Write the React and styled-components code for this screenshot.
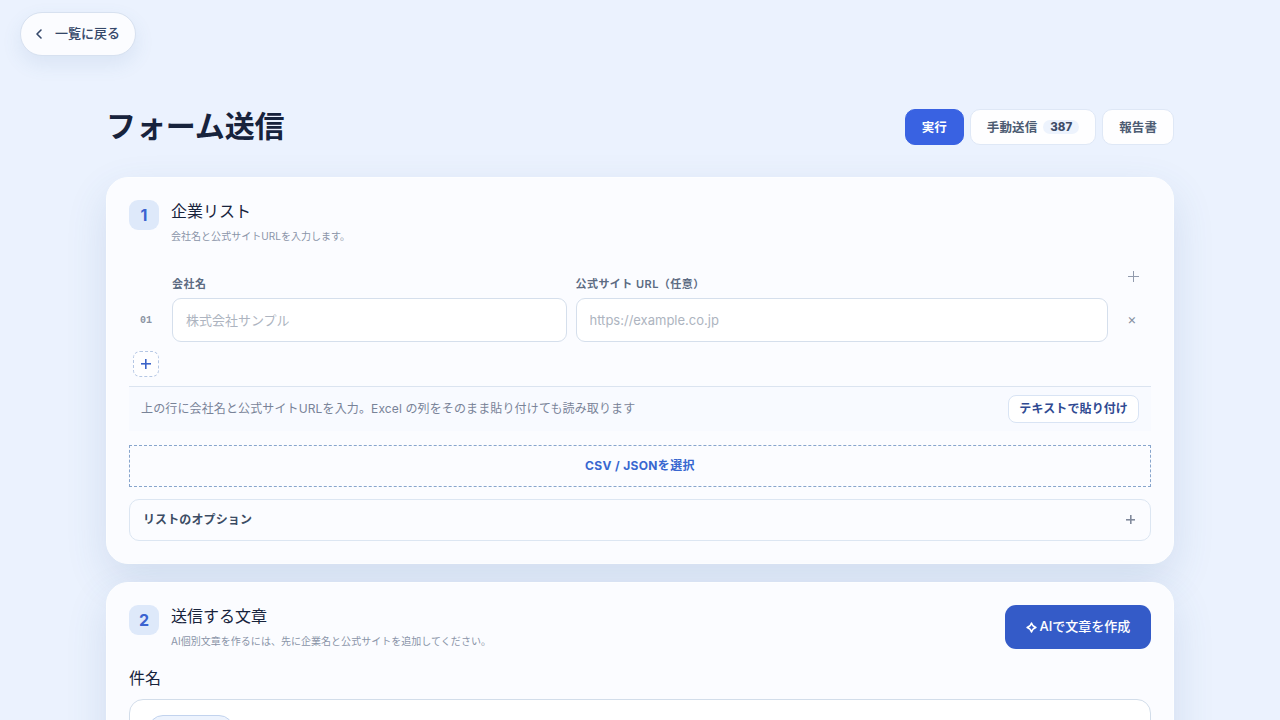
import styled, { createGlobalStyle, css } from "styled-components"
import { ChevronLeft } from "lucide-react"

function App() {
  return (
    <>
      <GlobalStyle />
      <Page>
        <BackButton>
          <ChevronLeft size={16} strokeWidth={2.4} />
          <span>一覧に戻る</span>
        </BackButton>
        <Main>
          <PageHeader>
            <Title>フォーム送信</Title>
            <Tabs>
              <Tab $active>実行</Tab>
              <Tab>手動送信<Count>387</Count></Tab>
              <Tab>報告書</Tab>
            </Tabs>
          </PageHeader>

          <Card $height="387px">
            <CardHeader>
              <Step>1</Step>
              <Heading>
                <h2>企業リスト</h2>
                <p>会社名と公式サイトURLを入力します。</p>
              </Heading>
            </CardHeader>
            <Grid>
              <span />
              <Label>会社名</Label>
              <Label>公式サイト URL（任意）</Label>
              <AddColumn><Cross $size={11} /></AddColumn>
              <RowNumber>01</RowNumber>
              <Input placeholder="株式会社サンプル" />
              <Input placeholder="https://example.co.jp" />
              <RemoveButton aria-label="削除">×</RemoveButton>
            </Grid>
            <AddRow><Cross $size={10} $bold /></AddRow>
            <HelpBar>
              <span>上の行に会社名と公式サイトURLを入力。Excel の列をそのまま貼り付けても読み取ります</span>
              <PasteButton>テキストで貼り付け</PasteButton>
            </HelpBar>
            <DropZone>CSV / JSONを選択</DropZone>
            <Options>
              リストのオプション
              <Cross $size={9} $bold />
            </Options>
          </Card>

          <Card $height="420px">
            <CardHeader>
              <Step>2</Step>
              <Heading>
                <h2>送信する文章</h2>
                <p>AI個別文章を作るには、先に企業名と公式サイトを追加してください。</p>
              </Heading>
              <AiButton>
                <svg width="11" height="11" viewBox="0 0 11 11" fill="none" stroke="currentColor" strokeWidth="1.4" strokeLinejoin="round">
                  <path d="M5.5 1 Q6.4 4.6 10 5.5 Q6.4 6.4 5.5 10 Q4.6 6.4 1 5.5 Q4.6 4.6 5.5 1Z" />
                </svg>
                <span>AIで文章を作成</span>
              </AiButton>
            </CardHeader>
            <SubjectLabel>件名</SubjectLabel>
            <SubjectBox><Chip /></SubjectBox>
          </Card>
        </Main>
      </Page>
    </>
  )
}

export default App

const GlobalStyle = createGlobalStyle`
* {
  box-sizing: border-box;
}
body {
  margin: 0;
  height: 720px;
  overflow: hidden;
  background: #ebf2fe;
  font-family: Inter, "Noto Sans CJK JP", sans-serif;
  color: #17233c;
}
h1, h2, p {
  margin: 0;
}
button, input {
  font-family: inherit;
}
`

const Page = styled.div`
height: 720px;
overflow: hidden;
padding: 12px 20px 0;
`

const BackButton = styled.button`
display: flex;
align-items: center;
gap: 8px;
width: 116px;
height: 44px;
padding: 0 0 0 10px;
border: 1px solid #d7e1f0;
border-radius: 22px;
background: #fbfcff;
box-shadow: 0 8px 20px rgba(70, 120, 160, 0.11);
color: #344769;
font-size: 13px;
font-weight: 500;
white-space: nowrap;
> svg {
  flex: none;
}
> span {
  padding-bottom: 3px;
  -webkit-text-stroke: 0.2px rgba(52, 71, 105, 0.35);
}
`

const Main = styled.main`
width: 1068px;
margin: 53px auto 0;
`

const PageHeader = styled.header`
display: flex;
align-items: center;
justify-content: space-between;
height: 36px;
margin-bottom: 32px;
`

const Title = styled.h1`
margin-top: -2px;
font-size: 30px;
line-height: 36px;
font-weight: 600;
letter-spacing: -0.1px;
`

const Tabs = styled.nav`
display: flex;
gap: 6px;
`

const Tab = styled.button`
display: flex;
align-items: center;
gap: 6px;
height: 36px;
padding: 0 16px 2px;
border: 1px solid #dfe8f6;
border-radius: 10px;
background: #fefeff;
color: #4c5b72;
font-size: 12.5px;
font-weight: 600;
letter-spacing: 0.1px;
white-space: nowrap;
${({ $active }) => $active && css`
  border-color: #3962e2;
  background: #3962e2;
  color: white;
`}
`

const Count = styled.span`
position: relative;
top: 1px;
padding: 0 7px;
border-radius: 8px;
background: #edf3fd;
color: #3e4c68;
font-size: 11.5px;
line-height: 14px;
font-weight: 800;
letter-spacing: 0;
`

const Card = styled.section`
height: ${({ $height }) => $height};
margin-bottom: 18px;
padding: 22px;
border: 1px solid #fdfeff;
border-radius: 22px;
background: #fbfcff;
box-shadow: 0 16px 42px rgba(60, 100, 150, 0.14);
`

const CardHeader = styled.div`
display: flex;
align-items: flex-start;
height: 44px;
`

const Step = styled.div`
width: 30px;
height: 30px;
margin-right: 12px;
border-radius: 9px;
background: #dee9fa;
color: #3b63d0;
font-size: 16px;
line-height: 30px;
font-weight: 700;
text-align: center;
`

const Heading = styled.div`
flex: 1;
margin-top: -1px;
> h2 {
  font-size: 16px;
  line-height: 24px;
  font-weight: 400;
}
> p {
  margin-top: 5px;
  color: #8a94a8;
  font-size: 10px;
  line-height: 16px;
  letter-spacing: 0.03px;
}
`

const Grid = styled.div`
display: grid;
grid-template-columns: 34px 394.5px 532.5px 30px;
grid-template-rows: 30px 44px;
column-gap: 9px;
margin-top: 24px;
`

const Label = styled.div`
padding-top: 8px;
color: #5c6b82;
font-size: 11px;
line-height: 16px;
font-weight: 600;
letter-spacing: 0.45px;
`

const AddColumn = styled.div`
display: flex;
justify-content: center;
padding: 3px 0 0 3px;
color: #929bad;
`

const RowNumber = styled.div`
align-self: center;
text-align: center;
color: #8b94a3;
font-family: "Liberation Mono", monospace;
font-size: 10px;
font-weight: 700;
`

const Input = styled.input`
width: 100%;
height: 44px;
padding: 0 13px 1px;
border: 1px solid #d5dfec;
border-radius: 9px;
background: white;
font-size: 13px;
&::placeholder {
  color: #adb4c0;
}
`

const RemoveButton = styled.button`
padding: 0 0 3px;
border: 0;
background: none;
color: #8791a3;
font-size: 14px;
`

/* plus sign made of two bars */
const Cross = styled.i`
display: block;
width: ${({ $size }) => $size}px;
height: ${({ $size }) => $size}px;
background:
  linear-gradient(currentColor, currentColor) center / 100% ${({ $bold }) => ($bold ? "1.6px" : "1px")} no-repeat,
  linear-gradient(currentColor, currentColor) center / ${({ $bold }) => ($bold ? "1.6px" : "1px")} 100% no-repeat;
`

const AddRow = styled.button`
display: grid;
place-items: center;
width: 26px;
height: 26px;
margin: 9px 0 9px 4px;
padding: 0;
border: 1px dashed #b5c7e4;
border-radius: 7px;
background: #fefeff;
color: #3b63c8;
`

const HelpBar = styled.div`
display: flex;
align-items: center;
justify-content: space-between;
height: 45px;
padding: 0 12px;
border-top: 1px solid #dbe4f0;
background: #f8faff;
color: #788398;
font-size: 12px;
letter-spacing: 0.13px;
> span {
  padding-bottom: 3px;
}
`

const PasteButton = styled.button`
height: 28px;
padding: 0 10px 3px;
border: 1px solid #d9e4f4;
border-radius: 8px;
background: white;
color: #304a92;
font-size: 12px;
font-weight: 600;
letter-spacing: 0.12px;
`

const DropZone = styled.div`
height: 42px;
margin: 14px 0 12px;
border: 1px dashed #87a5cc;
color: #3867d0;
font-size: 12px;
line-height: 40px;
font-weight: 700;
letter-spacing: 0.35px;
text-align: center;
`

const Options = styled.div`
display: flex;
align-items: center;
justify-content: space-between;
height: 42px;
padding: 0 15px 3px 13px;
border: 1px solid #dce6f2;
border-radius: 10px;
color: #3b4c64;
font-size: 12px;
font-weight: 700;
letter-spacing: 0.12px;
> i {
  position: relative;
  top: 1px;
  color: #818a9c;
}
`

const AiButton = styled.button`
display: flex;
align-items: center;
justify-content: center;
gap: 3px;
width: 146px;
height: 44px;
padding: 0;
border: 0;
border-radius: 11px;
background: #345bc8;
color: white;
font-size: 13px;
font-weight: 500;
> span {
  padding-bottom: 3px;
  -webkit-text-stroke: 0.2px rgba(255, 255, 255, 0.35);
}
`

const SubjectLabel = styled.div`
margin: 17px 0 9px;
font-size: 16px;
line-height: 24px;
`

const SubjectBox = styled.div`
height: 200px;
padding: 15px 18px;
border: 1px solid #d2ddea;
border-radius: 14px;
background: white;
`

const Chip = styled.div`
width: 86px;
height: 30px;
border: 1px solid #c2d3ee;
border-radius: 15px;
background: #edf3fd;
`
